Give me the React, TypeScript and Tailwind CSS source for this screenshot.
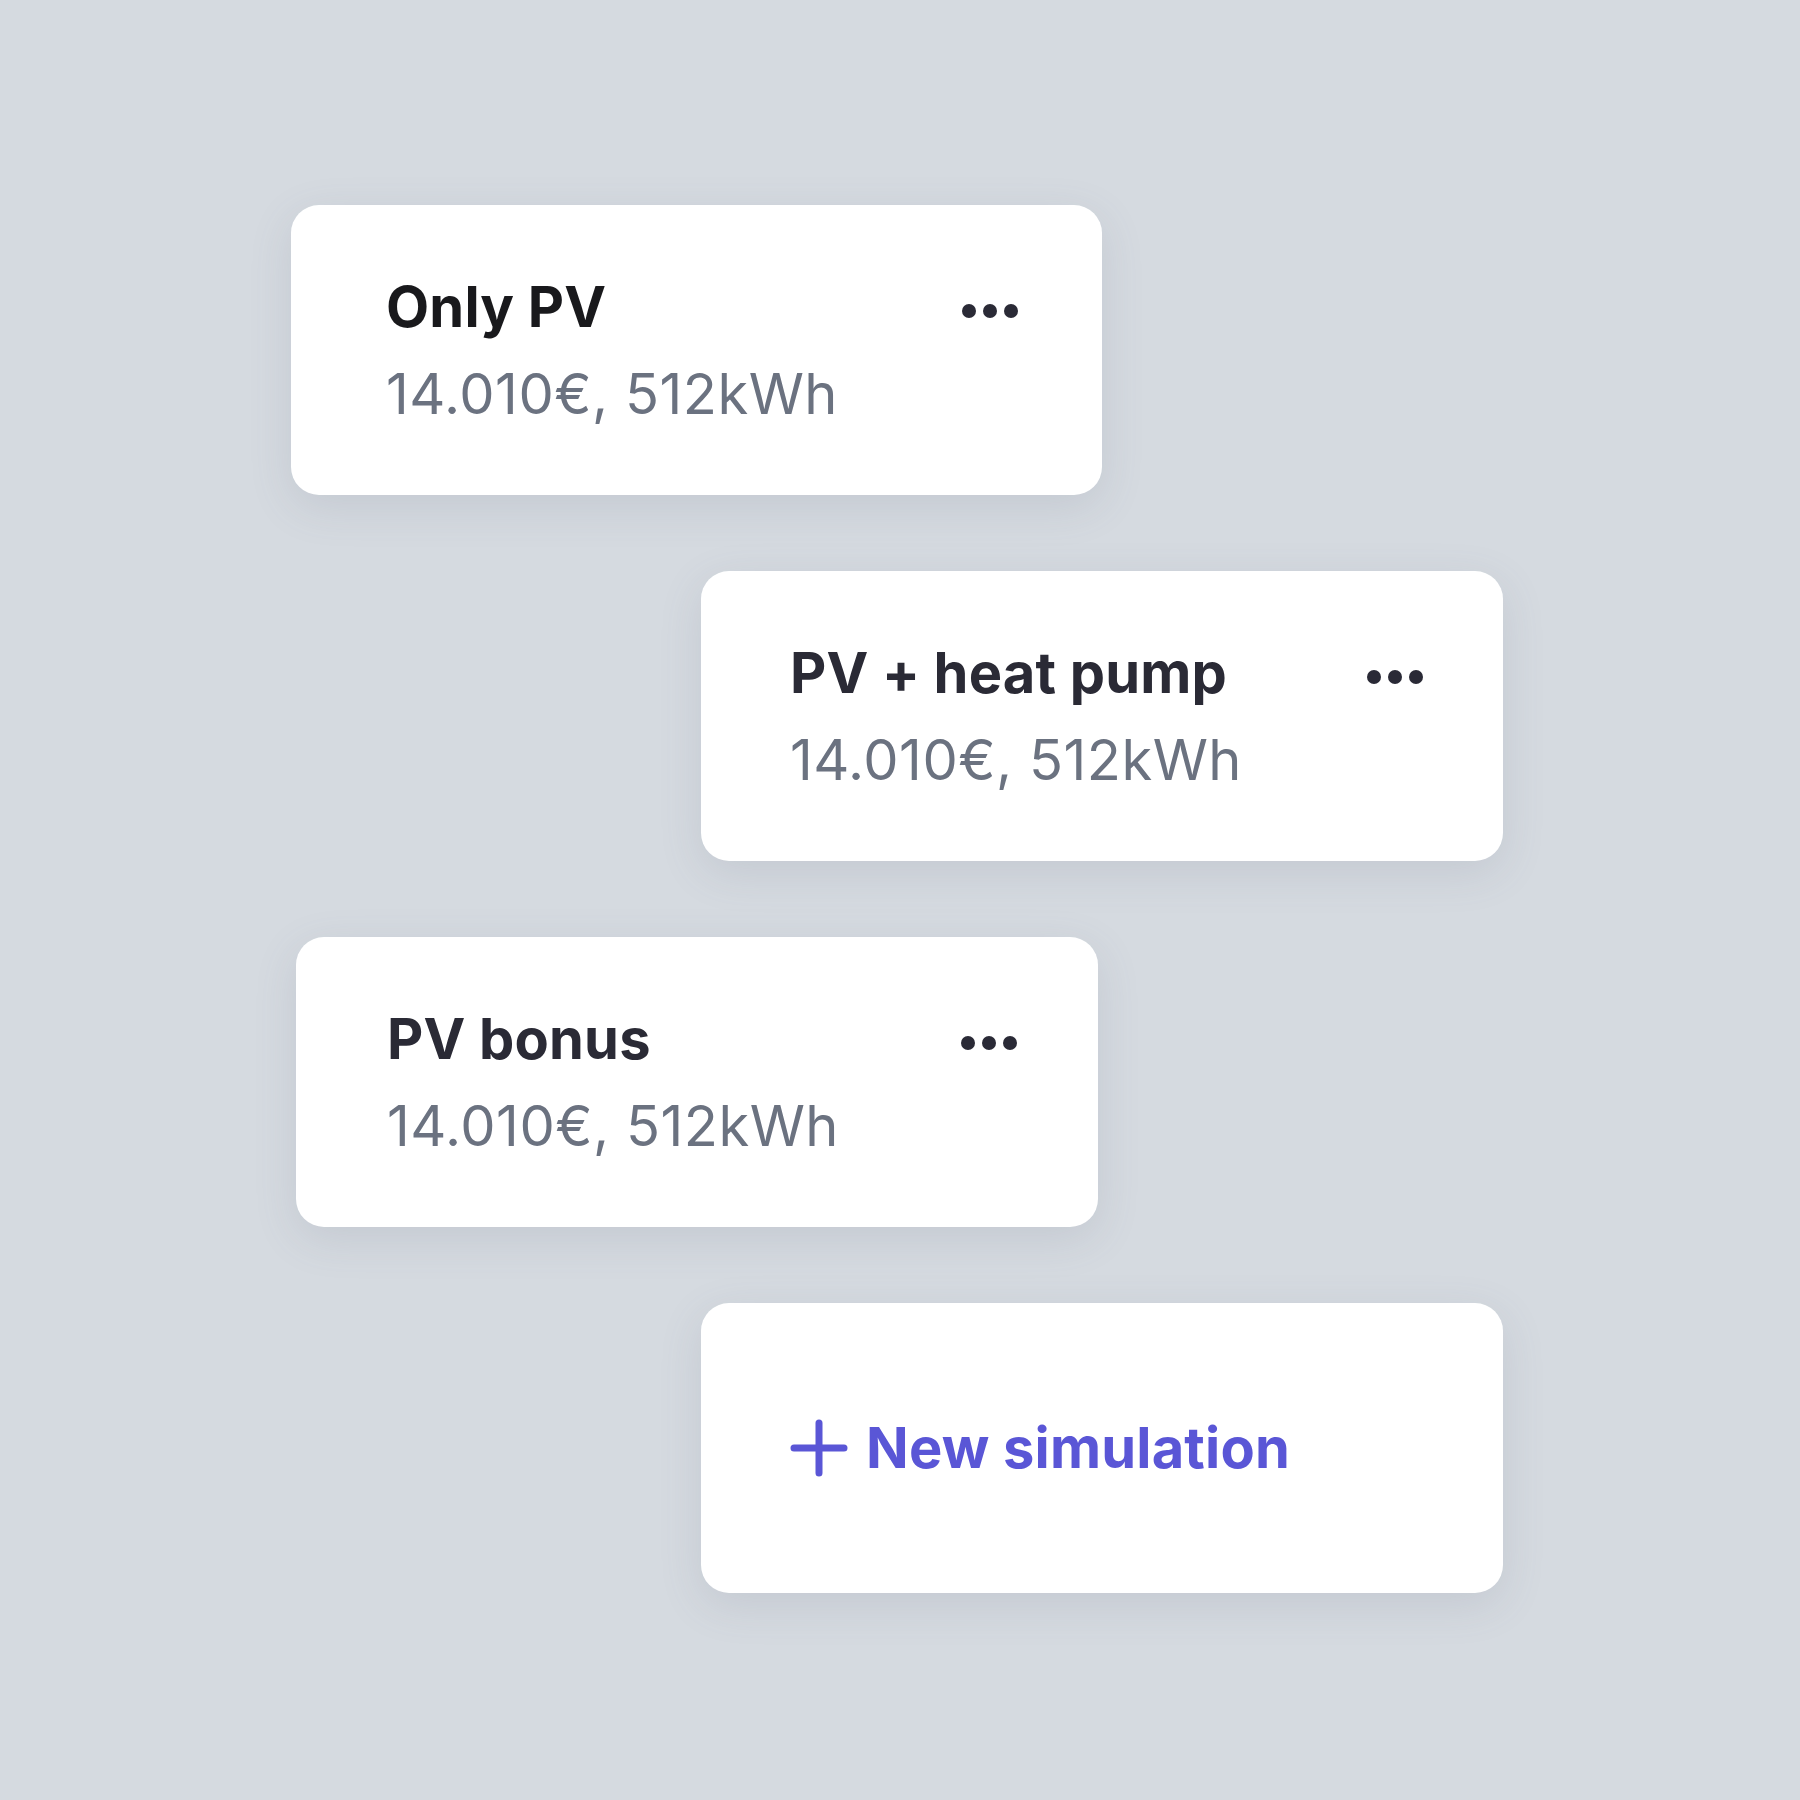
type Sim = {
  title: string;
  detail: string;
  offset: string;
  width: string;
  pad: string;
  titleColor: string;
};

const SIMULATIONS: Sim[] = [
  { title: 'Only PV', detail: '14.010€, 512kWh', offset: 'ml-[291px]', width: 'w-[811px]', pad: 'pl-[95px] pr-[84px]', titleColor: 'text-[#19191c]' },
  { title: 'PV + heat pump', detail: '14.010€, 512kWh', offset: 'ml-[701px]', width: 'w-[802px]', pad: 'pl-[89px] pr-[80px]', titleColor: 'text-[#2a2a35]' },
  { title: 'PV bonus', detail: '14.010€, 512kWh', offset: 'ml-[296px]', width: 'w-[802px]', pad: 'pl-[91px] pr-[81px]', titleColor: 'text-[#2a2a35]' },
];

function MoreDots() {
  return (
    <div className="flex items-center gap-[7px]">
      <span className="w-[14px] h-[14px] rounded-full bg-[#2a2a36]" />
      <span className="w-[14px] h-[14px] rounded-full bg-[#2a2a36]" />
      <span className="w-[14px] h-[14px] rounded-full bg-[#2a2a36]" />
    </div>
  );
}

function SimulationCard({ sim }: { sim: Sim }) {
  return (
    <div
      className={`${sim.offset} ${sim.width} ${sim.pad} h-[290px] bg-white rounded-[28px] shadow-[0_12px_44px_rgba(90,100,120,0.14)] flex items-center justify-between`}
    >
      <div className="flex flex-col gap-[31px]">
        <span className={`text-[56px] leading-none font-bold tracking-[0.2px] ${sim.titleColor}`}>{sim.title}</span>
        <span className="text-[56px] leading-none font-normal text-[#6b7280] tracking-[0.5px]">{sim.detail}</span>
      </div>
      <div className="self-start mt-[99px]">
        <MoreDots />
      </div>
    </div>
  );
}

export default function App() {
  return (
    <div
      className="w-[1800px] h-[1800px] bg-[#d5dae0] pt-[205px] flex flex-col gap-[76px]"
      style={{ fontFamily: 'Inter, "Noto Sans", sans-serif' }}
    >
      {SIMULATIONS.map((s) => (
        <SimulationCard key={s.title} sim={s} />
      ))}

      {/* New simulation */}
      <div className="ml-[701px] w-[802px] h-[290px] bg-white rounded-[28px] shadow-[0_12px_44px_rgba(90,100,120,0.14)] flex items-center pl-[89px]">
        <svg width="58" height="58" viewBox="0 0 58 58" fill="none" stroke="#5a56d6" strokeWidth="7" strokeLinecap="round">
          <path d="M29 4v50M4 29h50" />
        </svg>
        <span className="ml-[18px] text-[56px] leading-none font-bold text-[#5a56d6] tracking-[0.2px]">New simulation</span>
      </div>
    </div>
  );
}
